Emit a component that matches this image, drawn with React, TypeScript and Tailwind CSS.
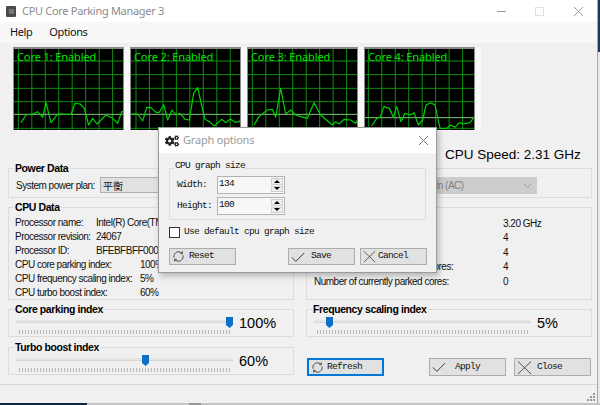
import React from "react";
import { FaCogs } from "react-icons/fa";

const GRID_Y = [183, 224, 265, 305, 385];
const CORES = [
  { name: "Core 1: Enabled", ox: 39, phase: 13, level: 343, pts: "60,368 75,345 95,342 110,335 125,352 135,308 150,368 170,342 210,343 222,310 238,312 250,325 263,375 275,355 288,372 315,345 335,355 350,370 362,335 372,335" },
  { name: "Core 2: Enabled", ox: 390, phase: 15, level: 343, pts: "392,342 410,342 425,363 437,322 450,323 465,337 475,337 488,314 500,360 513,330 525,345 537,340 552,358 565,360 578,280 590,263 605,330 612,358 625,365 640,378 662,358 675,368 688,357 702,367 715,365 722,352" },
  { name: "Core 3: Enabled", ox: 742, phase: 13, level: 343, pts: "760,375 775,350 800,330 815,328 825,352 840,265 855,342 870,330 885,345 900,350 920,355 940,308 960,345 995,375 1005,365 1015,372 1030,358 1050,360 1065,370 1074,355" },
  { name: "Core 4: Enabled", ox: 1095, phase: 10, level: 353, pts: "1115,378 1130,355 1140,352 1152,320 1168,325 1180,352 1190,320 1203,365 1215,340 1230,345 1242,338 1255,375 1268,360 1278,315 1292,308 1305,315 1320,385 1340,385 1352,375 1365,382 1378,368 1390,372 1410,368 1425,348" },
];

function Graph({ core }: { core: (typeof CORES)[number] }) {
  const xs = Array.from({ length: 8 }, (_, i) => core.ox + core.phase + i * 40.4);
  return (
    <div className="w-[117px] pr-[6px] bg-[#f8f8f8] shrink-0">
      <div className="relative h-[83px] w-[111px] bg-black border-t-2 border-l border-r border-[#8a8a8a]">
        <svg viewBox={`${core.ox} 147 327 243`} className="w-full h-full block" preserveAspectRatio="none">
          {xs.map((x) => (
            <line key={x} x1={x} x2={x} y1="141" y2="392" stroke="#0c900c" strokeWidth="3" />
          ))}
          {GRID_Y.map((y) => (
            <line key={y} x1={core.ox} x2={core.ox + 333} y1={y} y2={y} stroke="#0c900c" strokeWidth="3" />
          ))}
          <line x1={core.ox} x2={core.ox + 333} y1={core.level} y2={core.level} stroke="#7fc77f" strokeWidth="3" />
          <polyline points={core.pts} fill="none" stroke="#00d400" strokeWidth="3.5" strokeLinejoin="round" />
        </svg>
        <span className="absolute left-[3px] top-[-1px] text-[#00e400] text-[11px] tracking-[-0.1px] leading-[18px] font-['Noto_Sans',sans-serif] whitespace-nowrap">
          {core.name}
        </span>
      </div>
    </div>
  );
}

function Group({ title, className, children }: { title: string; className: string; children?: React.ReactNode }) {
  return (
    <fieldset className={`border border-[#dcdcdc] ${className}`}>
      <legend className="ml-[6px] pr-[1px] text-[10.5px] tracking-[-0.4px] leading-[12px] font-bold text-black">{title}</legend>
      {children}
    </fieldset>
  );
}

function Row({ label, value, valueX }: { label: string; value: string; valueX: string }) {
  return (
    <div className="flex h-[14px] items-center whitespace-nowrap text-[10px] tracking-[-0.5px] text-[#111]">
      <span className={`${valueX} shrink-0`}>{label}</span>
      <span>{value}</span>
    </div>
  );
}

function Slider({ title, pct, pos, className }: { title: string; pct: string; pos: number; className: string }) {
  return (
    <Group title={title} className={`h-[34px] ${className}`}>
      <div className="flex pl-[7px] pt-[2px]">
        <div className="w-[217px] shrink-0">
          <div className="relative h-[11px]">
            <div className="absolute left-0 right-0 top-[3px] h-[3px] bg-[#e4e4e4] border-b border-[#d6d6d6]" />
            <svg viewBox="0 0 7 11" className="absolute top-0 h-[11px] w-[7px]" style={{ left: pos }}>
              <path d="M0 0H7V8L3.5 11L0 8Z" fill="#0f6fc6" />
            </svg>
          </div>
          <div className="ml-[3px] mr-[3px] mt-[2px] h-[4px] bg-[repeating-linear-gradient(90deg,#b5b5b5_0_1px,transparent_1px_3px)]" />
        </div>
        <span className="ml-[6px] text-[14.5px] leading-[13px] text-black">{pct}</span>
      </div>
    </Group>
  );
}

function IconRefresh({ s = 16 }: { s?: number }) {
  return (
    <svg width={s} height={s} viewBox="0 0 16 16" fill="none" stroke="#333" strokeWidth="1.1" className="shrink-0">
      <path d="M2.5 9.5C1.6 5.5 4.5 2.2 8 2.2c1.6 0 3 .6 4 1.7" />
      <path d="M13.5 6.5c.9 4-2 7.3-5.5 7.3-1.6 0-3-.6-4-1.7" />
      <path d="M12.8 1.8v2.6h-2.6M3.2 14.2v-2.6h2.6" />
    </svg>
  );
}
function IconCheck({ s = 16 }: { s?: number }) {
  return (
    <svg width={s} height={s} viewBox="0 0 16 16" fill="none" stroke="#222" strokeWidth="1" className="shrink-0">
      <path d="M1 8.5 L5.5 13 L15 3.5" />
    </svg>
  );
}
function IconX({ s = 16 }: { s?: number }) {
  return (
    <svg width={s} height={s} viewBox="0 0 16 16" fill="none" stroke="#333" strokeWidth="0.9" className="shrink-0">
      <path d="M1 1.5 L15 15 M15 1.5 L1 15" />
    </svg>
  );
}

function Btn({ icon, label, className, gap }: { icon: React.ReactNode; label: string; className: string; gap: string }) {
  return (
    <div className={`flex items-center shrink-0 bg-[#e1e1e1] pl-[2px] font-['Liberation_Mono',monospace] text-[9.5px] tracking-[-0.7px] text-[#111] ${className}`}>
      {icon}
      <span className={gap}>{label}</span>
    </div>
  );
}

function Spin({ label, value, mt }: { label: string; value: string; mt: string }) {
  return (
    <div className={`ml-[7px] grid grid-cols-[40px_68px] items-center ${mt}`}>
      <span>{label}</span>
      <div className="flex h-[18px] border border-[#b4b4b4] bg-[#f7f7f7] pl-[1px]">
        <span className="block w-[52px] shrink-0 text-left leading-[13px]">{value}</span>
        <div className="my-[1px] flex w-[12px] flex-col gap-[1px]">
          <div className="flex h-[7px] items-center justify-center bg-[#eeeeee] border border-[#cfcfcf]">
            <div className="h-0 w-0 border-x-[3px] border-b-[3px] border-x-transparent border-b-black" />
          </div>
          <div className="flex h-[7px] items-center justify-center bg-[#eeeeee] border border-[#cfcfcf]">
            <div className="h-0 w-0 border-x-[3px] border-t-[3px] border-x-transparent border-t-black" />
          </div>
        </div>
      </div>
    </div>
  );
}

export default function App() {
  return (
    <div className="relative h-[405px] w-[600px] overflow-hidden bg-white font-['Liberation_Sans',Arial,sans-serif]">
      <div className="flex h-[403px]">
        <div className="flex w-[598px] shrink-0 flex-col border-r border-[#a8a8a8] bg-[#f0f0f0]">
          {/* title bar */}
          <div className="flex h-[22px] items-center bg-white pl-[6px]">
            <div className="flex h-[11px] w-[10px] items-center justify-center rounded-[1px] bg-[#4a4a4a]">
              <div className="h-[5px] w-[5px] bg-[#777]" />
            </div>
            <span className="ml-[6px] text-[11px] font-['Noto_Sans',sans-serif] tracking-[-0.3px] text-[#8c8c8c]">CPU Core Parking Manager 3</span>
            <div className="ml-auto flex items-center">
              <div className="mr-[29px] h-px w-[9px] bg-[#999]" />
              <div className="mr-[30px] h-[9px] w-[9px] border border-[#e0e0e0]" />
              <svg width="9" height="9" viewBox="0 0 9 9" stroke="#999" className="mr-[14px]">
                <path d="M0 0L9 9M9 0L0 9" />
              </svg>
            </div>
          </div>
          {/* menu */}
          <div className="flex h-[21px] items-center bg-[#f8f8f8] pl-[10px] text-[11px] tracking-[-0.4px] font-['Noto_Sans',sans-serif] text-[#111]">
            <span>Help</span>
            <span className="ml-[17px]">Options</span>
          </div>
          {/* graphs */}
          <div className="ml-[13px] mt-[4px] flex">
            {CORES.map((c) => (
              <Graph key={c.name} core={c} />
            ))}
          </div>
          {/* speed */}
          <div className="flex h-[32px] items-start pl-[445px] pt-[17px]">
            <span className="text-[13.5px] leading-[16px] whitespace-nowrap text-black">CPU Speed: 2.31 GHz</span>
          </div>
          {/* columns */}
          <div className="flex h-[222px] pl-[8px]">
            <div className="flex w-[286px] shrink-0 flex-col">
              <Group title="Power Data" className="h-[36px]">
                <div className="flex items-center whitespace-nowrap pl-[7px] pt-[3px] text-[10px] tracking-[-0.5px] text-[#111]">
                  <span className="w-[84px] shrink-0">System power plan:</span>
                  <div className="flex h-[16px] w-[180px] items-center bg-[#e1e1e1] border border-[#b0b0b0] pl-[2px] text-[10px] tracking-normal font-['Noto_Sans_CJK_SC',sans-serif]">平衡</div>
                </div>
              </Group>
              <Group title="CPU Data" className="mt-[3px] h-[99px]">
                <div className="pl-[6px] pt-[2px]">
                  <Row label="Processor name:" value="Intel(R) Core(TM) i5" valueX="w-[81px]" />
                  <Row label="Processor revision:" value="24067" valueX="w-[81px]" />
                  <Row label="Processor ID:" value="BFEBFBFF000506E3" valueX="w-[81px]" />
                  <Row label="CPU core parking index:" value="100%" valueX="w-[125px]" />
                  <Row label="CPU frequency scaling index:" value="5%" valueX="w-[125px]" />
                  <Row label="CPU turbo boost index:" value="60%" valueX="w-[125px]" />
                </div>
              </Group>
              <Slider title="Core parking index" pct="100%" pos={210} className="mt-[3px]" />
              <Slider title="Turbo boost index" pct="60%" pos={126} className="mt-[4px]" />
            </div>
            <div className="ml-[12px] flex w-[286px] shrink-0 flex-col">
              <Group title="Power Source" className="h-[36px]">
                <div className="flex items-center whitespace-nowrap pl-[7px] pt-[3px] text-[10px] tracking-[-0.5px] text-[#111]">
                  <span className="w-[66px] shrink-0">Power source:</span>
                  <div className="flex h-[17px] w-[157px] items-center justify-between bg-[#cccccc] pl-[20px] pr-[5px] text-[#7f7f7f]">
                    <span>Plugged In (AC)</span>
                    <svg width="9" height="5" viewBox="0 0 9 5" fill="none" stroke="#a0a0a0"><path d="M0.5 0.5L4.5 4.5L8.5 0.5" /></svg>
                  </div>
                </div>
              </Group>
              <Group title="Core Data" className="mt-[3px] h-[99px]">
                <div className="pl-[7px] pt-[3px] [&>div]:h-[14.5px]">
                  <Row label="" value="3.20 GHz" valueX="w-[189px]" />
                  <Row label="" value="4" valueX="w-[189px]" />
                  <Row label="" value="4" valueX="w-[189px]" />
                  <Row label="Number of currently enabled cores:" value="4" valueX="w-[189px]" />
                  <Row label="Number of currently parked cores:" value="0" valueX="w-[189px]" />
                </div>
              </Group>
              <Slider title="Frequency scaling index" pct="5%" pos={12} className="mt-[3px]" />
              <div className="mt-[21px] flex pl-[1px]">
                <Btn className="h-[18px] w-[77px] border-2 border-[#0078d7]" icon={<IconRefresh s={13} />} gap="ml-[3px]" label="Refresh" />
                <Btn className="ml-[45px] h-[18px] w-[77px] border border-[#adadad]" icon={<IconCheck s={14} />} gap="ml-[9px]" label="Apply" />
                <Btn className="ml-[8px] h-[18px] w-[77px] border border-[#adadad]" icon={<IconX s={15} />} gap="ml-[5px]" label="Close" />
              </div>
            </div>
          </div>
          {/* status strip */}
          <div className="flex flex-1 items-end justify-end border-t border-[#d6d6d6] pb-[1px] pr-[1px]">
            <svg width="9" height="9" viewBox="0 0 9 9" fill="#9a9a9a">
              <rect x="6" y="0" width="2" height="2" />
              <rect x="3" y="3" width="2" height="2" />
              <rect x="6" y="3" width="2" height="2" />
              <rect x="0" y="6" width="2" height="2" />
              <rect x="3" y="6" width="2" height="2" />
              <rect x="6" y="6" width="2" height="2" />
            </svg>
          </div>
        </div>
        <div className="flex flex-1 flex-col">
          <div className="h-[52px] bg-[#1d3a5c]" />
          <div className="flex-1 bg-[#e8e8e8]" />
        </div>
      </div>
      <div className="flex h-[2px]">
        <div className="w-[87px] bg-[#0a2540]" />
        <div className="w-[102px] bg-[#c4c4c4]" />
        <div className="w-[12px] bg-[#999]" />
        <div className="flex-1 bg-[#c4c4c4]" />
      </div>

      {/* dialog */}
      <div className="absolute left-[158px] top-[127px] flex h-[146px] w-[279px] flex-col border border-[#9a9a9a] bg-[#f0f0f0] shadow-[2px_3px_6px_rgba(0,0,0,0.25)]">
        <div className="flex h-[25px] shrink-0 items-center bg-white pl-[6px]">
          <FaCogs size={14} color="#222" />
          <span className="ml-[4px] text-[11px] tracking-[-0.2px] font-['Noto_Sans',sans-serif] text-[#9a9a9a]">Graph options</span>
          <svg width="9" height="9" viewBox="0 0 9 9" stroke="#777" className="ml-auto mr-[8px]">
            <path d="M0 0L9 9M9 0L0 9" />
          </svg>
        </div>
        <div className="flex flex-1 flex-col px-[10px] font-['Liberation_Mono',monospace] text-[9.5px] tracking-[-0.7px] text-[#111]">
          <fieldset className="mt-[9px] h-[58px] border border-[#dcdcdc]">
            <legend className="ml-[5px] pb-[4px] leading-[8px]">CPU graph size</legend>
            <Spin label="Width:" value="134" mt="mt-[2px]" />
            <Spin label="Height:" value="100" mt="mt-[3px]" />
          </fieldset>
          <div className="mt-[7px] flex h-[11px] items-center">
            <div className="h-[11px] w-[11px] border border-[#333] bg-white" />
            <span className="ml-[4px]">Use default cpu graph size</span>
          </div>
          <div className="mt-[10px] flex">
            <Btn className="h-[17px] w-[67px] border border-[#adadad]" icon={<IconRefresh s={13} />} gap="ml-[4px]" label="Reset" />
            <Btn className="ml-[52px] h-[17px] w-[67px] border border-[#adadad]" icon={<IconCheck s={14} />} gap="ml-[6px]" label="Save" />
            <Btn className="ml-[5px] h-[17px] w-[67px] border border-[#adadad]" icon={<IconX s={13} />} gap="ml-[2px]" label="Cancel" />
          </div>
        </div>
      </div>
    </div>
  );
}
